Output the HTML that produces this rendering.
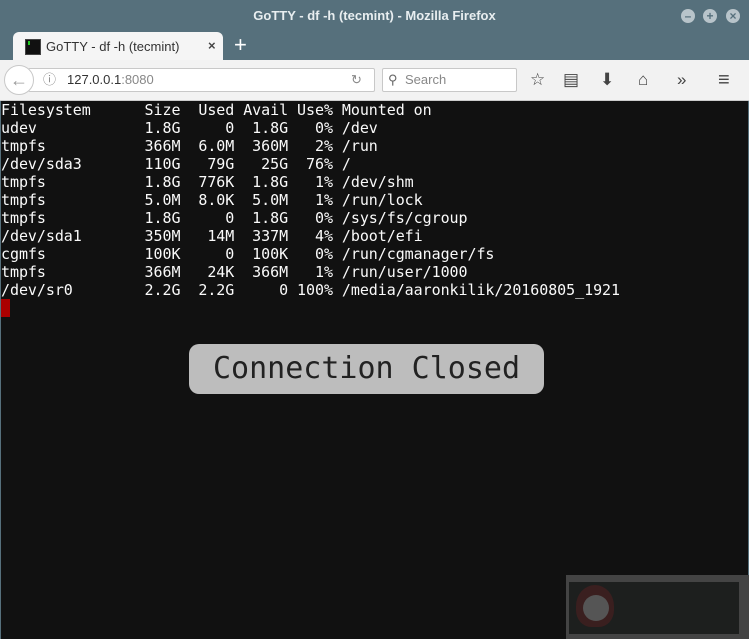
<!DOCTYPE html>
<html><head><style>
*{margin:0;padding:0;box-sizing:border-box}
body{width:749px;height:639px;overflow:hidden;background:#56707c;font-family:"Liberation Sans",sans-serif;position:relative}
.title{position:absolute;top:0;left:0;width:749px;height:32px;text-align:center;color:#e8eef0;font-weight:bold;font-size:13px;line-height:32px}
.wb{position:absolute;top:9px;width:14px;height:14px;border-radius:50%;background:#b8c4ca;color:#56707c;font-size:12px;line-height:14px;text-align:center;font-weight:bold}
.tab{position:absolute;left:13px;top:32px;width:210px;height:30px;background:#f5f5f5;border-radius:6px 6px 0 0}
.tab .ic{position:absolute;left:12px;top:7px;width:16px;height:16px;background:#111;border:1px solid #444}
.tab .ic:after{content:"";position:absolute;left:2px;top:1px;width:2px;height:4px;background:#2c2}
.tab .t{position:absolute;left:33px;top:7px;font-size:13px;color:#333}
.tab .x{position:absolute;left:195px;top:6px;font-size:13px;color:#444;font-weight:bold}
.plus{position:absolute;left:234px;top:32px;color:#fff;font-size:22px}
.tb{position:absolute;top:60px;left:0;width:749px;height:41px;background:#f2f2f2;border-bottom:1px solid #ccc}
.url{position:absolute;left:28px;top:8px;width:347px;height:24px;background:#fff;border:1px solid #c8c8c8;border-radius:2px;font-size:13px;line-height:22px;padding-left:38px;color:#333}
.back{position:absolute;left:4px;top:5px;width:30px;height:30px;border-radius:50%;background:#fff;border:1px solid #c8c8c8;color:#999;font-size:18px;text-align:center;line-height:28px}
.search{position:absolute;left:382px;top:8px;width:135px;height:24px;background:#fff;border:1px solid #c8c8c8;border-radius:2px;font-size:13px;line-height:22px;padding-left:22px;color:#888}
.icn{position:absolute;top:10px;font-size:17px;color:#444;line-height:20px}
.term{position:absolute;left:1px;top:101px;width:747px;height:538px;background:#111}
pre{position:absolute;left:1px;top:101px;font-family:"DejaVu Sans Mono","Liberation Mono",monospace;font-size:15px;line-height:18px;color:#fafafa;letter-spacing:-0.06px}
.cur{position:absolute;left:1px;top:299px;width:9px;height:18px;background:#a00}
.cc{position:absolute;left:189px;top:344px;width:355px;height:50px;background:#bdbdbd;border-radius:10px;font-family:"DejaVu Sans Mono",monospace;font-size:30px;line-height:50px;text-align:center;color:#222}
.ov{position:absolute;left:566px;top:575px;width:183px;height:64px;background:#444}
.ov .in{position:absolute;left:3px;top:7px;width:170px;height:52px;background:#1d1f1e}
.face{position:absolute;left:10px;top:10px;width:38px;height:42px;border-radius:50% 50% 40% 40%;background:#3a1f1f}
.face i{position:absolute;left:7px;top:10px;width:26px;height:26px;border-radius:50%;background:#555}
</style></head><body>
<div class="title">GoTTY - df -h (tecmint) - Mozilla Firefox</div>
<div class="wb" style="left:681px">–</div><div class="wb" style="left:703px">+</div><div class="wb" style="left:726px">×</div>
<div class="tab"><div class="ic"></div><div class="t">GoTTY - df -h (tecmint)</div><div class="x">×</div></div>
<div class="plus">+</div>
<div class="tb">
<div class="url"><span style="position:absolute;left:14px;color:#888">ⓘ</span>127.0.0.1<span style="color:#888">:8080</span><span style="position:absolute;left:322px;color:#888">↻</span></div>
<div class="back">←</div>
<div class="search"><span style="position:absolute;left:5px;color:#666">⚲</span>Search</div>
<div class="icn" style="left:530px">☆</div>
<div class="icn" style="left:563px">▤</div>
<div class="icn" style="left:600px">⬇</div>
<div class="icn" style="left:638px">⌂</div>
<div class="icn" style="left:677px">»</div>
<div class="icn" style="left:718px;font-size:20px">≡</div>
</div>
<div class="term"></div>
<pre>Filesystem      Size  Used Avail Use% Mounted on
udev            1.8G     0  1.8G   0% /dev
tmpfs           366M  6.0M  360M   2% /run
/dev/sda3       110G   79G   25G  76% /
tmpfs           1.8G  776K  1.8G   1% /dev/shm
tmpfs           5.0M  8.0K  5.0M   1% /run/lock
tmpfs           1.8G     0  1.8G   0% /sys/fs/cgroup
/dev/sda1       350M   14M  337M   4% /boot/efi
cgmfs           100K     0  100K   0% /run/cgmanager/fs
tmpfs           366M   24K  366M   1% /run/user/1000
/dev/sr0        2.2G  2.2G     0 100% /media/aaronkilik/20160805_1921</pre>
<div class="cur"></div>
<div class="cc">Connection Closed</div>
<div class="ov"><div class="in"></div><div class="face"><i></i></div></div>
</body></html>
